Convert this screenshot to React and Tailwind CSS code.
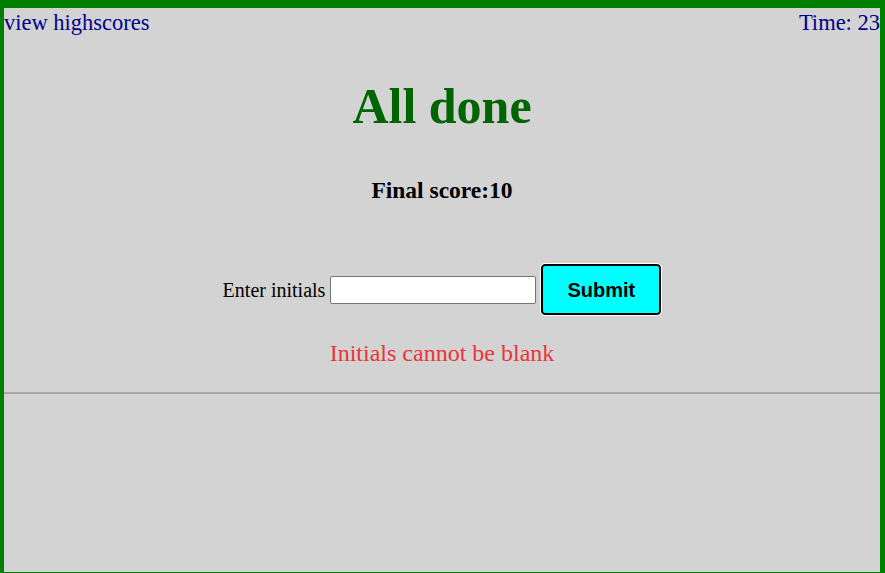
import React, { useState } from "react";

function App() {
  const [initials, setInitials] = useState("");

  return (
    <div
      className="h-[576px] bg-[#d3d3d3] border-4 border-t-[8px] border-r-[5px] border-[#008000] flex flex-col"
      style={{ fontFamily: '"Liberation Serif", "Times New Roman", serif' }}
    >
      {/* Header */}
      <div className="flex justify-between text-[22.5px] leading-[26px] text-[#00008b] mt-[2px]">
        <a href="#">view highscores</a>
        <span>Time: 23</span>
      </div>

      {/* Result */}
      <h1 className="text-center text-[50px] font-bold text-[#006400] leading-[57px] mt-[42px]">
        All done
      </h1>
      <p className="text-center text-[23.5px] font-bold text-black leading-[26px] mt-[42px]">
        Final score:10
      </p>

      {/* Initials form */}
      <form
        className="flex items-center justify-center mt-[61px]"
        onSubmit={(e) => e.preventDefault()}
      >
        <label className="text-[20px] text-black mr-[5px]">Enter initials</label>
        <input
          value={initials}
          onChange={(e) => setInitials(e.target.value)}
          className="w-[206px] h-[28px] bg-white border border-[#767676] rounded-[2px] px-1 text-base"
        />
        <button
          type="submit"
          className="ml-[5px] w-[120px] h-[51px] bg-[#00ffff] border-2 border-black rounded-[4px] outline outline-1 outline-white text-[20px] font-bold text-black"
          style={{ fontFamily: '"Liberation Sans", Arial, sans-serif' }}
        >
          Submit
        </button>
      </form>

      <p className="text-center text-[24px] text-[#ec3338] leading-[28px] mt-[24px]">
        Initials cannot be blank
      </p>

      <hr className="mt-[25px] border-0 h-[2px] bg-[#a9a9a9]" />
    </div>
  );
}

export default App;
